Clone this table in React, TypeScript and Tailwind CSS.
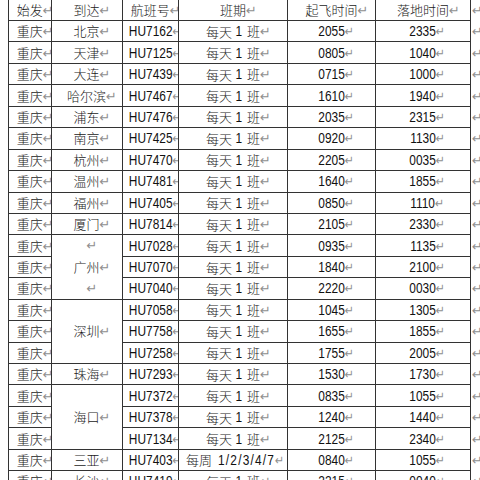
import React from "react";

const LAT =
  "inline-block whitespace-nowrap font-['Liberation_Sans',Arial,sans-serif] font-normal text-[14px] leading-none scale-x-[0.85] text-[#111]";

function Mark() {
  return (
    <span className="inline-block w-0 whitespace-nowrap font-['DejaVu_Sans',sans-serif] font-normal text-[13px] leading-none text-[#8f8f8f]">
      ↵
    </span>
  );
}

const CELL =
  "flex items-center justify-center overflow-hidden whitespace-nowrap border-r border-b border-[#333]";

type Row = {
  to: string | null;
  span?: number;
  padded?: boolean;
  fl: string;
  weekly?: boolean;
  dep: string;
  arr: string;
};

const rows: Row[] = [
  { to: "北京", fl: "HU7162", dep: "2055", arr: "2335" },
  { to: "天津", fl: "HU7125", dep: "0805", arr: "1040" },
  { to: "大连", fl: "HU7439", dep: "0715", arr: "1000" },
  { to: "哈尔滨", fl: "HU7467", dep: "1610", arr: "1940" },
  { to: "浦东", fl: "HU7476", dep: "2035", arr: "2315" },
  { to: "南京", fl: "HU7425", dep: "0920", arr: "1130" },
  { to: "杭州", fl: "HU7470", dep: "2205", arr: "0035" },
  { to: "温州", fl: "HU7481", dep: "1640", arr: "1855" },
  { to: "福州", fl: "HU7405", dep: "0850", arr: "1110" },
  { to: "厦门", fl: "HU7814", dep: "2105", arr: "2330" },
  { to: "广州", span: 3, padded: true, fl: "HU7028", dep: "0935", arr: "1135" },
  { to: null, fl: "HU7070", dep: "1840", arr: "2100" },
  { to: null, fl: "HU7040", dep: "2220", arr: "0030" },
  { to: "深圳", span: 3, fl: "HU7058", dep: "1045", arr: "1305" },
  { to: null, fl: "HU7758", dep: "1655", arr: "1855" },
  { to: null, fl: "HU7258", dep: "1755", arr: "2005" },
  { to: "珠海", fl: "HU7293", dep: "1530", arr: "1730" },
  { to: "海口", span: 3, fl: "HU7372", dep: "0835", arr: "1055" },
  { to: null, fl: "HU7378", dep: "1240", arr: "1440" },
  { to: null, fl: "HU7134", dep: "2125", arr: "2340" },
  { to: "三亚", fl: "HU7403", weekly: true, dep: "0840", arr: "1055" },
  { to: "长沙", fl: "HU7419", dep: "2215", arr: "0040" },
];

function Cjk({ t }: { t: string }) {
  return (
    <span className="whitespace-nowrap">
      {t}
      <Mark />
    </span>
  );
}

function Lat({ t }: { t: string }) {
  return (
    <span className={LAT}>
      {t}
      <Mark />
    </span>
  );
}

export default function App() {
  const headers = ["始发", "到达", "航班号", "班期", "起飞时间", "落地时间"];
  return (
    <div className="w-[480px] h-[480px] overflow-hidden bg-white pl-[8px] font-['Noto_Sans_CJK_SC','Noto_Sans',sans-serif] font-light text-[13px] leading-none text-[#1a1a1a]">
      <div className="grid grid-cols-[43.5px_71.2px_56.3px_109px_88px_95px_1fr] grid-rows-[21px_repeat(22,21.45px)]">
        {headers.map((h, i) => (
          <div key={h} className={CELL + (i === 0 ? " border-l" : "")}>
            <Cjk t={h} />
          </div>
        ))}
        <div className="flex items-center overflow-hidden pl-[1px]">
          <Mark />
        </div>

        {rows.map((r, i) => (
          <React.Fragment key={i}>
            <div className={CELL + " border-l"}>
              <Cjk t="重庆" />
            </div>
            {r.to !== null &&
              (r.span ? (
                r.padded ? (
                  <div className="row-span-3 flex flex-col overflow-hidden border-r border-b border-[#333]">
                    <div className="flex flex-1 items-center justify-center">
                      <Mark />
                    </div>
                    <div className="flex flex-1 items-center justify-center">
                      <Cjk t={r.to} />
                    </div>
                    <div className="flex flex-1 items-center justify-center">
                      <Mark />
                    </div>
                  </div>
                ) : (
                  <div className={CELL + " row-span-3"}>
                    <Cjk t={r.to} />
                  </div>
                )
              ) : (
                <div className={CELL}>
                  <Cjk t={r.to} />
                </div>
              ))}
            <div className={CELL}>
              <Lat t={r.fl} />
            </div>
            <div className={CELL}>
              {r.weekly ? (
                <>
                  <span className="mr-[1px]">每周</span>
                  <span className={LAT + " tracking-[1.4px]"}>
                    1/2/3/4/7
                    <Mark />
                  </span>
                </>
              ) : (
                <>
                  <span>每天</span>
                  <span className={LAT + " ml-[3px] mr-[4px]"}>1</span>
                  <Cjk t="班" />
                </>
              )}
            </div>
            <div className={CELL}>
              <Lat t={r.dep} />
            </div>
            <div className={CELL}>
              <Lat t={r.arr} />
            </div>
            <div className="flex items-center overflow-hidden pl-[1px]">
              <Mark />
            </div>
          </React.Fragment>
        ))}
      </div>
    </div>
  );
}
